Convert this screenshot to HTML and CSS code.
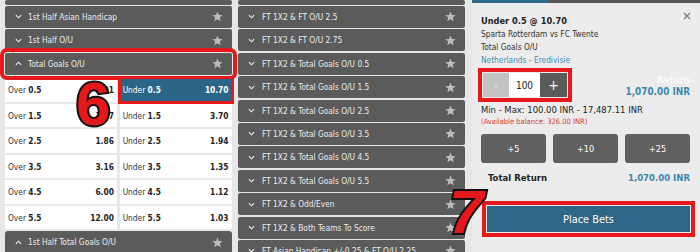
FILE: index.html
```html
<!DOCTYPE html>
<html>
<head>
<meta charset="utf-8">
<link rel="stylesheet" href="styles.css">
</head>
<body>
<div class="page">
  <div class="col col-left">
    <div class="bar stub"></div>
    <div class="bar"><svg class="chev" viewBox="0 0 8 5"><path d="M1 1 L4 4 L7 1" /></svg><span class="label">1st Half Asian Handicap</span><svg class="star" viewBox="0 0 10 10"><polygon points="5,0.4 6.3,3.6 9.7,3.8 7.1,6 7.9,9.4 5,7.6 2.1,9.4 2.9,6 0.3,3.8 3.7,3.6"/></svg></div>
    <div class="bar"><svg class="chev" viewBox="0 0 8 5"><path d="M1 1 L4 4 L7 1" /></svg><span class="label">1st Half O/U</span><svg class="star" viewBox="0 0 10 10"><polygon points="5,0.4 6.3,3.6 9.7,3.8 7.1,6 7.9,9.4 5,7.6 2.1,9.4 2.9,6 0.3,3.8 3.7,3.6"/></svg></div>
    <div class="bar hl"><svg class="chev" viewBox="0 0 8 5"><path d="M1 4 L4 1 L7 4" /></svg><span class="label">Total Goals O/U</span><svg class="star" viewBox="0 0 10 10"><polygon points="5,0.4 6.3,3.6 9.7,3.8 7.1,6 7.9,9.4 5,7.6 2.1,9.4 2.9,6 0.3,3.8 3.7,3.6"/></svg></div>
    <div class="odds">
      <div class="orow"><div class="cell"><span>Over <b>0.5</b></span><b>1.01</b></div><div class="cell sel"><span>Under <b>0.5</b></span><b>10.70</b></div></div>
      <div class="orow"><div class="cell"><span>Over <b>1.5</b></span><b>1.27</b></div><div class="cell"><span>Under <b>1.5</b></span><b>3.70</b></div></div>
      <div class="orow"><div class="cell"><span>Over <b>2.5</b></span><b>1.86</b></div><div class="cell"><span>Under <b>2.5</b></span><b>1.94</b></div></div>
      <div class="orow"><div class="cell"><span>Over <b>3.5</b></span><b>3.16</b></div><div class="cell"><span>Under <b>3.5</b></span><b>1.35</b></div></div>
      <div class="orow"><div class="cell"><span>Over <b>4.5</b></span><b>6.00</b></div><div class="cell"><span>Under <b>4.5</b></span><b>1.12</b></div></div>
      <div class="orow"><div class="cell"><span>Over <b>5.5</b></span><b>12.00</b></div><div class="cell"><span>Under <b>5.5</b></span><b>1.03</b></div></div>
    </div>
    <div class="bar last"><svg class="chev" viewBox="0 0 8 5"><path d="M1 4 L4 1 L7 4" /></svg><span class="label">1st Half Total Goals O/U</span><svg class="star" viewBox="0 0 10 10"><polygon points="5,0.4 6.3,3.6 9.7,3.8 7.1,6 7.9,9.4 5,7.6 2.1,9.4 2.9,6 0.3,3.8 3.7,3.6"/></svg></div>
  </div>

  <div class="col col-mid">
    <div class="bar stub"></div>
    <div class="bar"><svg class="chev" viewBox="0 0 8 5"><path d="M1 1 L4 4 L7 1" /></svg><span class="label">FT 1X2 &amp; FT O/U 2.5</span><svg class="star" viewBox="0 0 10 10"><polygon points="5,0.4 6.3,3.6 9.7,3.8 7.1,6 7.9,9.4 5,7.6 2.1,9.4 2.9,6 0.3,3.8 3.7,3.6"/></svg></div>
    <div class="bar"><svg class="chev" viewBox="0 0 8 5"><path d="M1 1 L4 4 L7 1" /></svg><span class="label">FT 1X2 &amp; FT O/U 2.75</span><svg class="star" viewBox="0 0 10 10"><polygon points="5,0.4 6.3,3.6 9.7,3.8 7.1,6 7.9,9.4 5,7.6 2.1,9.4 2.9,6 0.3,3.8 3.7,3.6"/></svg></div>
    <div class="bar"><svg class="chev" viewBox="0 0 8 5"><path d="M1 1 L4 4 L7 1" /></svg><span class="label">FT 1X2 &amp; Total Goals O/U 0.5</span><svg class="star" viewBox="0 0 10 10"><polygon points="5,0.4 6.3,3.6 9.7,3.8 7.1,6 7.9,9.4 5,7.6 2.1,9.4 2.9,6 0.3,3.8 3.7,3.6"/></svg></div>
    <div class="bar"><svg class="chev" viewBox="0 0 8 5"><path d="M1 1 L4 4 L7 1" /></svg><span class="label">FT 1X2 &amp; Total Goals O/U 1.5</span><svg class="star" viewBox="0 0 10 10"><polygon points="5,0.4 6.3,3.6 9.7,3.8 7.1,6 7.9,9.4 5,7.6 2.1,9.4 2.9,6 0.3,3.8 3.7,3.6"/></svg></div>
    <div class="bar"><svg class="chev" viewBox="0 0 8 5"><path d="M1 1 L4 4 L7 1" /></svg><span class="label">FT 1X2 &amp; Total Goals O/U 2.5</span><svg class="star" viewBox="0 0 10 10"><polygon points="5,0.4 6.3,3.6 9.7,3.8 7.1,6 7.9,9.4 5,7.6 2.1,9.4 2.9,6 0.3,3.8 3.7,3.6"/></svg></div>
    <div class="bar"><svg class="chev" viewBox="0 0 8 5"><path d="M1 1 L4 4 L7 1" /></svg><span class="label">FT 1X2 &amp; Total Goals O/U 3.5</span><svg class="star" viewBox="0 0 10 10"><polygon points="5,0.4 6.3,3.6 9.7,3.8 7.1,6 7.9,9.4 5,7.6 2.1,9.4 2.9,6 0.3,3.8 3.7,3.6"/></svg></div>
    <div class="bar"><svg class="chev" viewBox="0 0 8 5"><path d="M1 1 L4 4 L7 1" /></svg><span class="label">FT 1X2 &amp; Total Goals O/U 4.5</span><svg class="star" viewBox="0 0 10 10"><polygon points="5,0.4 6.3,3.6 9.7,3.8 7.1,6 7.9,9.4 5,7.6 2.1,9.4 2.9,6 0.3,3.8 3.7,3.6"/></svg></div>
    <div class="bar"><svg class="chev" viewBox="0 0 8 5"><path d="M1 1 L4 4 L7 1" /></svg><span class="label">FT 1X2 &amp; Total Goals O/U 5.5</span><svg class="star" viewBox="0 0 10 10"><polygon points="5,0.4 6.3,3.6 9.7,3.8 7.1,6 7.9,9.4 5,7.6 2.1,9.4 2.9,6 0.3,3.8 3.7,3.6"/></svg></div>
    <div class="bar"><svg class="chev" viewBox="0 0 8 5"><path d="M1 1 L4 4 L7 1" /></svg><span class="label">FT 1X2 &amp; Odd/Even</span><svg class="star" viewBox="0 0 10 10"><polygon points="5,0.4 6.3,3.6 9.7,3.8 7.1,6 7.9,9.4 5,7.6 2.1,9.4 2.9,6 0.3,3.8 3.7,3.6"/></svg></div>
    <div class="bar"><svg class="chev" viewBox="0 0 8 5"><path d="M1 1 L4 4 L7 1" /></svg><span class="label">FT 1X2 &amp; Both Teams To Score</span><svg class="star" viewBox="0 0 10 10"><polygon points="5,0.4 6.3,3.6 9.7,3.8 7.1,6 7.9,9.4 5,7.6 2.1,9.4 2.9,6 0.3,3.8 3.7,3.6"/></svg></div>
    <div class="bar"><svg class="chev" viewBox="0 0 8 5"><path d="M1 1 L4 4 L7 1" /></svg><span class="label">FT Asian Handicap +/-0.25 &amp; FT O/U 2.25</span><svg class="star" viewBox="0 0 10 10"><polygon points="5,0.4 6.3,3.6 9.7,3.8 7.1,6 7.9,9.4 5,7.6 2.1,9.4 2.9,6 0.3,3.8 3.7,3.6"/></svg></div>
  </div>

  <div class="slip">
    <div class="tabs"><div class="tab-on"></div><div class="tab-off"></div></div>
    <div class="slip-head">
      <div class="title">Under 0.5 @ 10.70</div>
      <svg class="close" viewBox="0 0 8 8"><path d="M1 1 L7 7 M7 1 L1 7"/></svg>
    </div>
    <div class="info">Sparta Rotterdam vs FC Twente</div>
    <div class="info">Total Goals O/U</div>
    <div class="info league">Netherlands - Eredivisie</div>
    <div class="stake-row">
      <div class="stake"><div class="minus">-</div><div class="amt">100</div><div class="plus">+</div></div>
      <div class="ret"><span class="ret-label">Return</span><span class="ret-val">1,070.00 INR</span></div>
    </div>
    <div class="minmax">Min - Max: 100.00 INR - 17,487.11 INR</div>
    <div class="bal">(Available balance: 326.00 INR)</div>
    <div class="quick"><div class="qbtn">+5</div><div class="qbtn">+10</div><div class="qbtn">+25</div></div>
    <div class="total"><span>Total Return</span><span class="blue">1,070.00 INR</span></div>
    <div class="place">Place Bets</div>
  </div>

  <span class="num n6">6</span>
  <span class="num n7">7</span>
</div>
</body>
</html>
```

FILE: styles.css
```css
* { box-sizing: border-box; }
body {
  margin: 0;
  background: #e7e7e7;
  font-family: "DejaVu Sans Condensed", "DejaVu Sans", sans-serif;
  font-stretch: condensed;
}
.page {
  position: relative;
  width: 700px;
  height: 252px;
  overflow: hidden;
  display: flex;
  padding-left: 5px;
}
.col {
  width: 227px;
  flex: none;
  display: flex;
  flex-direction: column;
  gap: 1.4px;
}
.col-left { margin-right: 6px; }
.col-mid { margin-right: 7px; }
.bar {
  height: 22px;
  flex: none;
  background: #5b5b5b;
  border-radius: 2px;
  display: flex;
  align-items: center;
  padding: 0 9px 0 10px;
  color: #ececec;
  font-size: 8.3px;
}
.stub { height: 4.6px; }
.chev {
  width: 7px;
  height: 5px;
  margin-right: 6px;
  flex: none;
}
.chev path { fill: none; stroke: #f0f0f0; stroke-width: 1.3; }
.col-mid .chev { margin-right: 7px; }
.label { flex: 1; white-space: nowrap; overflow: hidden; }
.star { width: 11px; height: 11px; flex: none; }
.star polygon { fill: #bcbcbc; }
.hl {
  outline: 4px solid #e5191c;
  outline-offset: 1px;
  position: relative;
  z-index: 1;
}
.odds {
  margin-top: 2.1px;
  margin-bottom: 0.6px;
  display: flex;
  flex-direction: column;
  gap: 2px;
}
.orow {
  display: grid;
  grid-template-columns: 1fr 1fr;
  gap: 2.3px;
  height: 23.5px;
}
.cell {
  background: #fff;
  display: flex;
  align-items: center;
  justify-content: space-between;
  padding: 0 3.5px 0 3px;
  font-size: 8.3px;
  color: #333;
}
.cell b { color: #222; }
.cell.sel {
  background: #2b6688;
  color: #fff;
  outline: 3px solid #e5191c;
  outline-offset: -1px;
  position: relative;
  z-index: 2;
}
.cell.sel b { color: #fff; }
.last { border-radius: 3px 3px 0 0; }

.slip {
  width: 228px;
  flex: none;
  background: #ececec;
  display: flex;
  flex-direction: column;
  padding: 0 10px 0 9px;
  color: #222;
}
.tabs { display: flex; height: 3px; margin: 0 -10px 0 -9px; }
.tab-on { width: 76px; background: #2c6a8c; }
.tab-off { flex: 1; background: #555; }
.slip-head {
  display: flex;
  justify-content: space-between;
  margin-top: 11px;
}
.title { font-weight: bold; font-size: 9.2px; line-height: 14px; }
.close { width: 8px; height: 8px; margin-top: -2px; margin-right: -1px; }
.close path { stroke: #808080; stroke-width: 1.4; fill: none; }
.info { font-size: 8.3px; line-height: 13px; color: #333; }
.league { color: #4a8db5; }
.stake-row {
  display: flex;
  justify-content: space-between;
  margin-top: 6px;
  height: 24px;
}
.stake {
  display: flex;
  margin-left: 2px;
  outline: 4px solid #e5191c;
  outline-offset: 1px;
}
.stake div { display: flex; align-items: center; justify-content: center; }
.minus { width: 26px; background: #c4c4c4; color: #f4f4f4; font-size: 11px; }
.amt { width: 31px; background: #fff; color: #222; font-size: 10px; }
.plus { width: 27px; background: #5b5b5b; color: #fff; font-size: 14px; }
.ret { display: flex; flex-direction: column; align-items: flex-end; padding-top: 1px; }
.ret-label { font-weight: bold; font-size: 9.5px; line-height: 12px; color: #f9f9f9; }
.ret-val { font-weight: bold; font-size: 9.9px; line-height: 12px; color: #3f86ad; }
.minmax { margin-top: 5.5px; font-size: 9.4px; line-height: 13px; }
.bal { font-size: 7.5px; line-height: 11px; color: #d83a3a; }
.quick {
  display: grid;
  grid-template-columns: repeat(3, 1fr);
  gap: 7px;
  margin-top: 7.5px;
  height: 29px;
}
.qbtn {
  background: #606060;
  border-radius: 3px;
  color: #fff;
  font-size: 9px;
  display: flex;
  align-items: center;
  justify-content: center;
}
.total {
  display: flex;
  justify-content: space-between;
  margin-top: 8px;
  padding-left: 7px;
  line-height: 14px;
  font-weight: bold;
  font-size: 9.5px;
}
.blue { color: #3f86ad; }
.place {
  margin-top: 21px;
  margin-left: 6px;
  height: 26px;
  background: #2d6686;
  color: #fff;
  font-size: 10.9px;
  outline: 4px solid #e5191c;
  outline-offset: 1px;
  display: flex;
  align-items: center;
  justify-content: center;
}
.num {
  position: absolute;
  z-index: 5;
  font-family: "Liberation Sans", sans-serif;
  font-weight: bold;
  font-size: 62px;
  line-height: 1;
  color: #e5191c;
  -webkit-text-stroke: 4px #111;
  paint-order: stroke fill;
}
.n6 { left: 76px; top: 73px; }
.n7 { left: 449px; top: 181px; font-style: italic; }
```
